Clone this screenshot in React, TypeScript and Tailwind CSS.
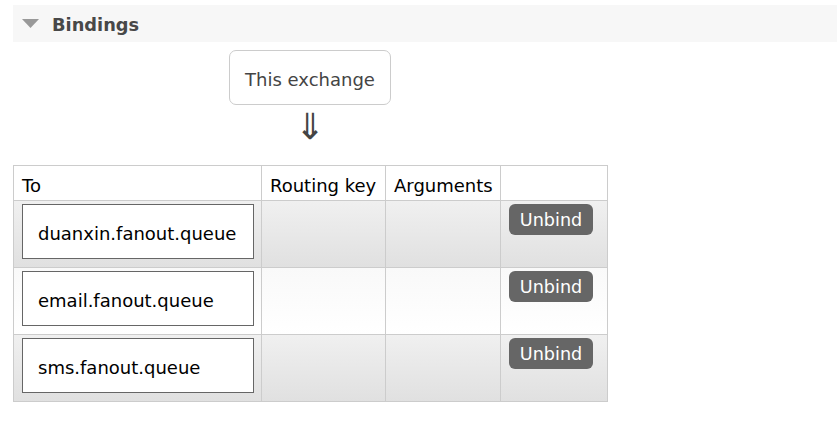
import React from "react";

const rows = [
  { name: "duanxin.fanout.queue", alt: 1 },
  { name: "email.fanout.queue", alt: 2 },
  { name: "sms.fanout.queue", alt: 1 },
];

export default function App() {
  return (
    <div
      className="w-[837px] h-[422px] bg-white overflow-hidden pt-[5px] pl-[13px] text-[18px] text-black"
      style={{ fontFamily: '"DejaVu Sans", Verdana, sans-serif' }}
    >
      <div className="h-[37px] w-[840px] bg-[#f7f7f7] flex items-center">
        <svg width="17" height="10" viewBox="0 0 17 10" className="ml-[9px] mt-[1px]">
          <polygon points="0,0 17,0 8.5,9" fill="#999999" />
        </svg>
        <span className="ml-[13px] mt-[3px] font-bold text-[17.8px] text-[#484848] leading-none">Bindings</span>
      </div>
      <div className="ml-[216px] mt-[8px] w-[162px] h-[55px] border border-[#cccccc] rounded-[7px] flex items-center justify-center pt-[3px] text-[#444444]">
        This exchange
      </div>
      <div className="ml-[216px] w-[162px] h-[60px] flex justify-center pt-[4px]">
        <span className="text-[36px] leading-[36px] text-[#444444]">⇓</span>
      </div>
      <table className="border-collapse table-fixed w-[594px]">
        <colgroup>
          <col className="w-[248px]" />
          <col className="w-[124px]" />
          <col className="w-[115px]" />
          <col className="w-[107px]" />
        </colgroup>
        <thead>
          <tr className="h-[35px] bg-white">
            <th className="border border-[#cccccc] px-[8px] pt-[4px] text-left font-normal align-middle whitespace-nowrap">To</th>
            <th className="border border-[#cccccc] pl-[8px] pr-0 pt-[4px] text-left font-normal align-middle whitespace-nowrap">Routing key</th>
            <th className="border border-[#cccccc] pl-[8px] pr-0 pt-[4px] text-left font-normal align-middle whitespace-nowrap">Arguments</th>
            <th className="border border-[#cccccc] px-[8px] pt-[4px] text-left font-normal align-middle"></th>
          </tr>
        </thead>
        <tbody>
          {rows.map((r) => (
            <tr
              key={r.name}
              className={
                r.alt === 1
                  ? "h-[67px] bg-gradient-to-b from-[#f0f0f0] to-[#e0e0e0]"
                  : "h-[67px] bg-gradient-to-b from-[#f9f9f9] to-[#ffffff]"
              }
            >
              <td className="border border-[#cccccc] pl-[8px] pr-0 pt-[3px] pb-[7px] align-top">
                <div className="w-[232px] h-[55px] border border-[#666666] bg-white flex items-center pl-[15px] pt-[3px]">
                  {r.name}
                </div>
              </td>
              <td className="border border-[#cccccc]"></td>
              <td className="border border-[#cccccc]"></td>
              <td className="border border-[#cccccc] pl-[8px] pt-[3px] align-top">
                <button className="w-[84px] h-[31px] bg-[#666666] rounded-[6px] text-white text-[17.6px] flex items-center justify-center pt-[2px] leading-none">
                  Unbind
                </button>
              </td>
            </tr>
          ))}
        </tbody>
      </table>
    </div>
  );
}
